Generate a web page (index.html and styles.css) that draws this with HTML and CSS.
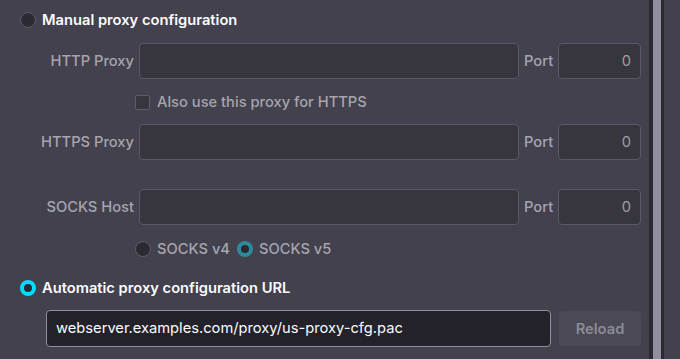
FILE: index.html
```html
<!DOCTYPE html>
<html lang="en">
<head>
  <meta charset="UTF-8">
  <title>Proxy settings</title>
  <link rel="stylesheet" href="styles.css">
</head>
<body>
  <div class="page">
    <div class="content">

      <label class="option">
        <span class="radio"></span>
        <span>Manual proxy configuration</span>
      </label>

      <div class="grid row-http">
        <span class="field-label">HTTP Proxy</span>
        <div class="input"></div>
        <span class="port-label">Port</span>
        <div class="input port">0</div>
      </div>

      <label class="check-row">
        <span class="checkbox"></span>
        <span>Also use this proxy for HTTPS</span>
      </label>

      <div class="grid row-https">
        <span class="field-label">HTTPS Proxy</span>
        <div class="input"></div>
        <span class="port-label">Port</span>
        <div class="input port">0</div>
      </div>

      <div class="grid row-socks">
        <span class="field-label">SOCKS Host</span>
        <div class="input"></div>
        <span class="port-label">Port</span>
        <div class="input port">0</div>
      </div>

      <div class="socks-versions">
        <label class="small-option">
          <span class="radio small"></span>
          <span>SOCKS v4</span>
        </label>
        <label class="small-option">
          <span class="radio small checked-dim"></span>
          <span>SOCKS v5</span>
        </label>
      </div>

      <label class="option auto">
        <span class="radio checked"></span>
        <span>Automatic proxy configuration URL</span>
      </label>

      <div class="url-row">
        <div class="url-input">webserver.examples.com/proxy/us-proxy-cfg.pac</div>
        <button class="reload" type="button">Reload</button>
      </div>

    </div>

    <div class="scroll-track">
      <div class="scroll-edge"></div>
      <div class="scroll-thumb"></div>
      <div class="scroll-edge right"></div>
    </div>
  </div>
</body>
</html>
```

FILE: styles.css
```css
html, body {
  margin: 0;
  padding: 0;
}

body {
  background: #42414d;
  color: #fbfbfe;
  font-family: Inter, "Noto Sans", sans-serif;
  font-size: 14.7px;
}

.page {
  display: flex;
  height: 359px;
}

.content {
  width: 649px;
}

.option {
  display: flex;
  align-items: center;
  gap: 6px;
  height: 20px;
  margin-top: 10px;
  padding-left: 20px;
  font-weight: 600;
  color: #fbfbfe;
}

.option.auto {
  margin-top: 19px;
}

.radio {
  box-sizing: border-box;
  width: 16px;
  height: 16px;
  border-radius: 50%;
  border: 1px solid #5e5d69;
  background: #2b2a33;
}

.radio.checked {
  border: 4px solid #00ddff;
  background: #2b2a33;
}

.radio.checked-dim {
  border: 4px solid #2c8a9b;
  background: #2b2a33;
}

.grid {
  display: grid;
  grid-template-columns: 134px 380px 29px 83px;
  column-gap: 5px;
  align-items: center;
  height: 36px;
}

.row-http {
  margin-top: 13px;
}

.row-https {
  margin-top: 12px;
}

.row-socks {
  margin-top: 29px;
}

.field-label {
  text-align: right;
  color: #a6a5ae;
  font-weight: 500;
  white-space: nowrap;
}

.port-label {
  color: #a6a5ae;
  font-weight: 500;
}

.input {
  box-sizing: border-box;
  height: 36px;
  border: 1px solid #5a5965;
  border-radius: 4px;
  background: #37363f;
}

.input.port {
  text-align: right;
  padding-right: 9px;
  line-height: 34px;
  color: #9f9ea7;
}

.check-row {
  display: flex;
  align-items: center;
  gap: 7px;
  height: 20px;
  margin-top: 13px;
  padding-left: 135px;
  color: #a6a5ae;
  font-weight: 500;
}

.checkbox {
  box-sizing: border-box;
  width: 15px;
  height: 15px;
  border: 1px solid #5e5d69;
  border-radius: 2px;
  background: #37363f;
}

.socks-versions {
  display: flex;
  align-items: center;
  gap: 7px;
  height: 20px;
  margin-top: 14px;
  padding-left: 135px;
}

.small-option {
  display: flex;
  align-items: center;
  gap: 6px;
  color: #a6a5ae;
  font-weight: 500;
}

.url-row {
  display: flex;
  align-items: center;
  margin-top: 12px;
  padding-left: 46px;
  gap: 8px;
}

.url-input {
  box-sizing: border-box;
  width: 505px;
  height: 37px;
  padding-left: 9px;
  line-height: 35px;
  border: 1px solid #8f8f9d;
  border-radius: 4px;
  background: #23222b;
  color: #fbfbfe;
}

.reload {
  width: 82px;
  height: 35px;
  border: none;
  border-radius: 4px;
  background: #4a4955;
  color: #8c8b94;
  font-family: inherit;
  font-size: 14.7px;
  font-weight: 600;
}

.scroll-track {
  display: flex;
  height: 100%;
}

.scroll-edge {
  width: 4px;
  background: #2b2a33;
}

.scroll-edge.right {
  width: 3px;
}

.scroll-thumb {
  width: 8px;
  background: #8f8f9d;
}
```
